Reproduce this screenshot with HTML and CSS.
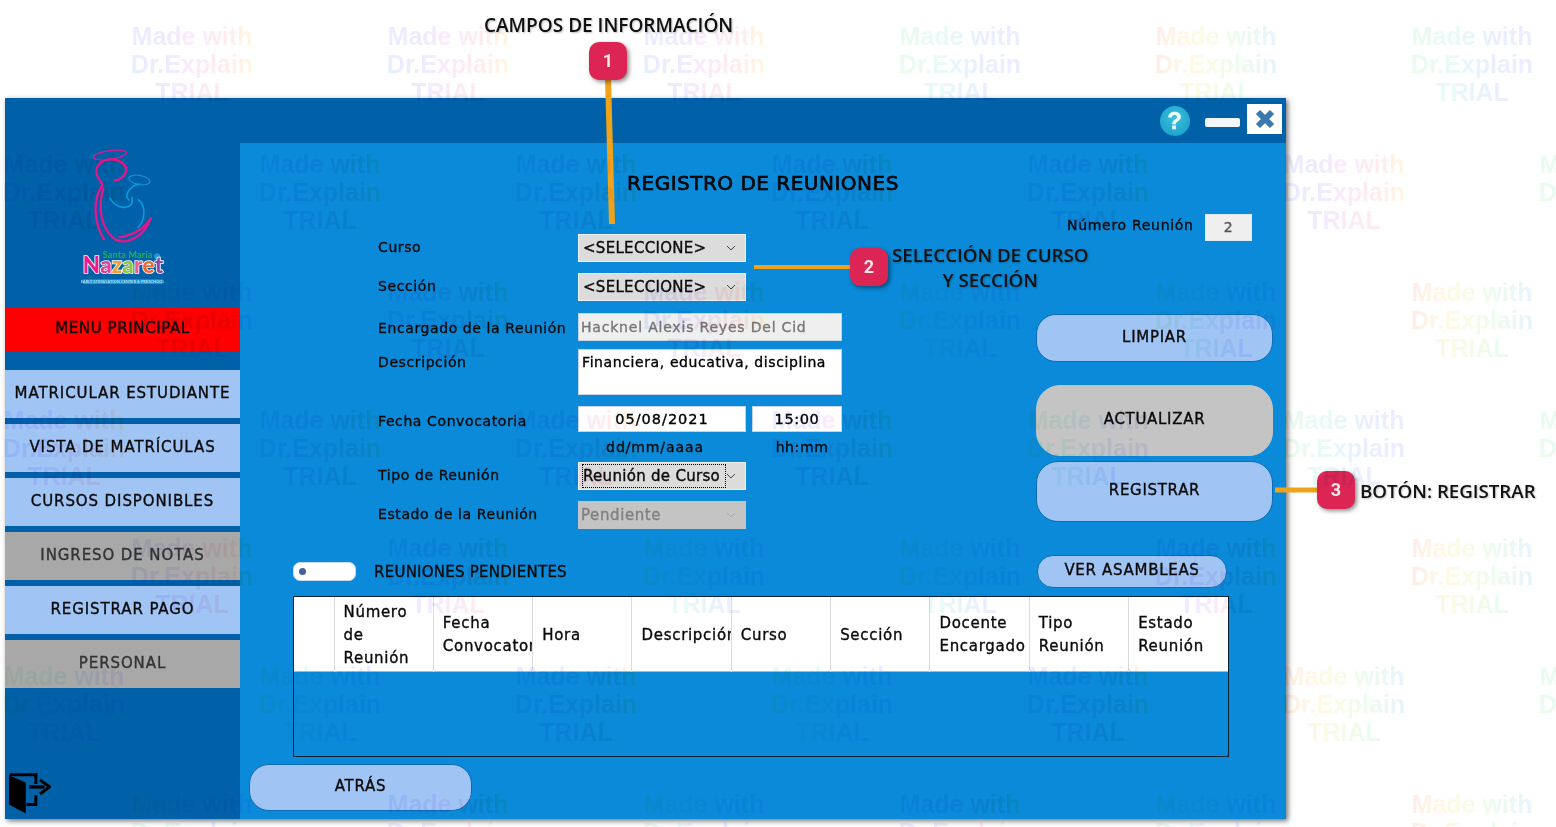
FILE: index.html
```html
<!DOCTYPE html>
<html lang="es">
<head>
    <meta charset="UTF-8">
    <meta name="viewport" content="width=device-width, initial-scale=1.0">
    <title>Registro de Reuniones</title>
    <link rel="stylesheet" href="styles.css">
</head>
<body>

<div class="app">
    <div class="topbar">
        <div class="help">?</div>
        <div class="minimize"></div>
        <div class="close">
            <svg width="22" height="22" viewBox="0 0 22 22"><path d="M4 4 L18 18 M18 4 L4 18" stroke="#3a78b0" stroke-width="6"/></svg>
        </div>
    </div>

    <div class="app-body">
        <div class="sidebar">
            <svg class="logo" width="120" height="147" viewBox="0 9 360 441">
                <g fill="none" stroke="#e0188f" stroke-width="7" stroke-linecap="round">
                    <ellipse cx="150" cy="45" rx="50" ry="13" transform="rotate(-8 150 45)" stroke-width="4"/>
                    <path d="M198 82 C178 50 130 50 112 80 C100 105 125 122 127 135 C103 170 95 235 132 298"/>
                    <path d="M130 145 C115 195 118 262 165 298 C205 318 255 285 272 235"/>
                    <path d="M178 292 C215 285 252 270 272 235"/>
                    <path d="M198 82 C202 98 190 116 165 122"/>
                </g>
                <g fill="none" stroke="#0f97dc" stroke-width="5" stroke-linecap="round">
                    <ellipse cx="238" cy="120" rx="32" ry="14" transform="rotate(10 238 120)" stroke-width="3"/>
                    <path d="M240 132 C212 135 190 165 207 180"/>
                    <path d="M150 175 C175 215 225 208 216 172"/>
                    <path d="M235 178 C262 200 252 245 235 262"/>
                </g>
                <text class="logo-santa" x="128" y="355">Santa María</text>
                <circle cx="291" cy="349" r="9" fill="#1c9ad6"/>
                <text class="logo-name" x="68" y="398"><tspan fill="#ec1c8c">N</tspan><tspan fill="#e33b9a">a</tspan><tspan fill="#f0a030">z</tspan><tspan fill="#8dc63f">a</tspan><tspan fill="#ee5a8c">r</tspan><tspan fill="#ee6a30">e</tspan><tspan fill="#8e4aa8">t</tspan></text>
                <rect x="68" y="418" width="240" height="14" fill="#1c9ad6"/>
                <text class="logo-strip" x="188" y="429">EARLY STIMULATION CENTER &amp; PRESCHOOL</text>
            </svg>

            <div class="menu-main">MENU PRINCIPAL</div>
            <div class="nav">
                <div class="nav-item">MATRICULAR ESTUDIANTE</div>
                <div class="nav-item">VISTA DE MATRÍCULAS</div>
                <div class="nav-item">CURSOS DISPONIBLES</div>
                <div class="nav-item off">INGRESO DE NOTAS</div>
                <div class="nav-item">REGISTRAR PAGO</div>
                <div class="nav-item off">PERSONAL</div>
            </div>

            <svg class="exit" width="43" height="42" viewBox="25 372 128 124">
                <path d="M28 378 L78 400 V492 L28 465 Z" fill="#000"/>
                <path d="M30 377 H108 V404 M108 438 V465 H80" fill="none" stroke="#000" stroke-width="9"/>
                <path d="M88 413 H134" stroke="#000" stroke-width="10"/>
                <path d="M120 392 L149 413 L120 434" fill="none" stroke="#000" stroke-width="9"/>
            </svg>
        </div>

        <div class="main">
            <h1>REGISTRO DE REUNIONES</h1>

            <div class="upper">
                <div class="form">
                    <label>Curso</label>
                    <div class="select"><span>&lt;SELECCIONE&gt;</span><svg width="10" height="6" viewBox="0 0 10 6"><path d="M1 1 L5 5 L9 1" fill="none" stroke="#444"/></svg></div>

                    <label>Sección</label>
                    <div class="select"><span>&lt;SELECCIONE&gt;</span><svg width="10" height="6" viewBox="0 0 10 6"><path d="M1 1 L5 5 L9 1" fill="none" stroke="#444"/></svg></div>

                    <label class="low">Encargado de la Reunión</label>
                    <input class="readonly" type="text" value="Hacknel Alexis Reyes Del Cid" readonly>

                    <label>Descripción</label>
                    <textarea readonly>Financiera, educativa, disciplina</textarea>

                    <label class="low">Fecha Convocatoria</label>
                    <div class="date-row">
                        <input class="date" type="text" value="05/08/2021" readonly>
                        <input class="time" type="text" value="15:00" readonly>
                    </div>

                    <div></div>
                    <div class="hint-row">
                        <span class="hint-date">dd/mm/aaaa</span>
                        <span class="hint-time">hh:mm</span>
                    </div>

                    <label>Tipo de Reunión</label>
                    <div class="select"><span class="focused">Reunión de Curso</span><svg width="10" height="6" viewBox="0 0 10 6"><path d="M1 1 L5 5 L9 1" fill="none" stroke="#444"/></svg></div>

                    <label>Estado de la Reunión</label>
                    <div class="select disabled"><span>Pendiente</span><svg width="10" height="6" viewBox="0 0 10 6"><path d="M1 1 L5 5 L9 1" fill="none" stroke="#aaa"/></svg></div>
                </div>

                <div class="actions">
                    <div class="numero">
                        <span>Número Reunión</span>
                        <div class="numero-box">2</div>
                    </div>
                    <button class="btn limpiar">LIMPIAR</button>
                    <button class="btn actualizar">ACTUALIZAR</button>
                    <button class="btn registrar">REGISTRAR</button>
                </div>
            </div>

            <div class="pending">
                <div class="toggle"><i></i></div>
                <span>REUNIONES PENDIENTES</span>
                <button class="btn ver">VER ASAMBLEAS</button>
            </div>

            <div class="table-box">
                <table>
                    <tr>
                        <th class="first"></th>
                        <th>Número<br>de<br>Reunión</th>
                        <th>Fecha<br>Convocatoria</th>
                        <th>Hora</th>
                        <th>Descripción</th>
                        <th>Curso</th>
                        <th>Sección</th>
                        <th>Docente<br>Encargado</th>
                        <th>Tipo<br>Reunión</th>
                        <th>Estado<br>Reunión</th>
                    </tr>
                </table>
            </div>

            <button class="btn atras">ATRÁS</button>
        </div>
    </div>
</div>

<!-- Anotaciones sobre la captura -->
<svg class="callout-lines" width="1556" height="827">
    <path d="M608 78 L612 224" stroke="#f0a318" stroke-width="6"/>
    <path d="M754 267 H852" stroke="#f0a318" stroke-width="4"/>
    <path d="M1275 490 H1320" stroke="#f0a318" stroke-width="5"/>
</svg>
<div class="badge b1">1</div>
<div class="badge b2">2</div>
<div class="badge b3">3</div>
<div class="note n1">CAMPOS DE INFORMACIÓN</div>
<div class="note n2">SELECCIÓN DE CURSO<br>Y SECCIÓN</div>
<div class="note n3">BOTÓN: REGISTRAR</div>

<!-- Marca de agua -->
<div class="watermark">
    <div class="wm-row odd">
        <div class="wm a">Made with<br>Dr.Explain<br>TRIAL</div>
        <div class="wm a">Made with<br>Dr.Explain<br>TRIAL</div>
        <div class="wm a">Made with<br>Dr.Explain<br>TRIAL</div>
        <div class="wm b">Made with<br>Dr.Explain<br>TRIAL</div>
        <div class="wm c">Made with<br>Dr.Explain<br>TRIAL</div>
        <div class="wm b">Made with<br>Dr.Explain<br>TRIAL</div>
    </div>
    <div class="wm-row">
        <div class="wm a">Made with<br>Dr.Explain<br>TRIAL</div>
        <div class="wm a">Made with<br>Dr.Explain<br>TRIAL</div>
        <div class="wm a">Made with<br>Dr.Explain<br>TRIAL</div>
        <div class="wm a">Made with<br>Dr.Explain<br>TRIAL</div>
        <div class="wm a">Made with<br>Dr.Explain<br>TRIAL</div>
        <div class="wm a">Made with<br>Dr.Explain<br>TRIAL</div>
        <div class="wm b">Made with<br>Dr.Explain<br>TRIAL</div>
    </div>
    <div class="wm-row odd">
        <div class="wm b">Made with<br>Dr.Explain<br>TRIAL</div>
        <div class="wm a">Made with<br>Dr.Explain<br>TRIAL</div>
        <div class="wm a">Made with<br>Dr.Explain<br>TRIAL</div>
        <div class="wm b">Made with<br>Dr.Explain<br>TRIAL</div>
        <div class="wm b">Made with<br>Dr.Explain<br>TRIAL</div>
        <div class="wm c">Made with<br>Dr.Explain<br>TRIAL</div>
    </div>
    <div class="wm-row">
        <div class="wm a">Made with<br>Dr.Explain<br>TRIAL</div>
        <div class="wm a">Made with<br>Dr.Explain<br>TRIAL</div>
        <div class="wm a">Made with<br>Dr.Explain<br>TRIAL</div>
        <div class="wm a">Made with<br>Dr.Explain<br>TRIAL</div>
        <div class="wm b">Made with<br>Dr.Explain<br>TRIAL</div>
        <div class="wm b">Made with<br>Dr.Explain<br>TRIAL</div>
        <div class="wm b">Made with<br>Dr.Explain<br>TRIAL</div>
    </div>
    <div class="wm-row odd">
        <div class="wm a">Made with<br>Dr.Explain<br>TRIAL</div>
        <div class="wm a">Made with<br>Dr.Explain<br>TRIAL</div>
        <div class="wm b">Made with<br>Dr.Explain<br>TRIAL</div>
        <div class="wm b">Made with<br>Dr.Explain<br>TRIAL</div>
        <div class="wm a">Made with<br>Dr.Explain<br>TRIAL</div>
        <div class="wm c">Made with<br>Dr.Explain<br>TRIAL</div>
    </div>
    <div class="wm-row">
        <div class="wm b">Made with<br>Dr.Explain<br>TRIAL</div>
        <div class="wm b">Made with<br>Dr.Explain<br>TRIAL</div>
        <div class="wm a">Made with<br>Dr.Explain<br>TRIAL</div>
        <div class="wm b">Made with<br>Dr.Explain<br>TRIAL</div>
        <div class="wm a">Made with<br>Dr.Explain<br>TRIAL</div>
        <div class="wm c">Made with<br>Dr.Explain<br>TRIAL</div>
        <div class="wm b">Made with<br>Dr.Explain<br>TRIAL</div>
    </div>
    <div class="wm-row odd">
        <div class="wm b">Made with<br>Dr.Explain<br>TRIAL</div>
        <div class="wm a">Made with<br>Dr.Explain<br>TRIAL</div>
        <div class="wm b">Made with<br>Dr.Explain<br>TRIAL</div>
        <div class="wm a">Made with<br>Dr.Explain<br>TRIAL</div>
        <div class="wm b">Made with<br>Dr.Explain<br>TRIAL</div>
        <div class="wm c">Made with<br>Dr.Explain<br>TRIAL</div>
    </div>
</div>

</body>
</html>
```

FILE: styles.css
```css
* {
    box-sizing: border-box;
}
html, body {
    height: 827px;
    overflow: hidden;
}
body {
    margin: 0;
    padding: 98px 0 0 5px;
    background-color: white;
    font-family: "DejaVu Sans", sans-serif;
    font-size: 14px;
    letter-spacing: 0.6px;
    color: #0a0a0a;
    position: relative;
}

/* Ventana */
.app {
    width: 1281px;
    height: 721px;
    display: flex;
    flex-direction: column;
    background-color: #0a8ad8;
    box-shadow: 2px 2px 5px rgba(0,0,0,0.55);
    -webkit-text-stroke: 0.35px currentColor;
}
.topbar {
    height: 45px;
    background-color: #0060a8;
    display: flex;
    align-items: flex-start;
    justify-content: flex-end;
    padding: 6px 4px 0 0;
}
.help {
    width: 30px;
    height: 30px;
    margin-top: 2px;
    border-radius: 50%;
    background: radial-gradient(circle at 50% 40%, #3cc0dc, #149cc8);
    color: #eefafd;
    font: bold 24px/30px "Liberation Sans", sans-serif;
    text-align: center;
}
.minimize {
    width: 35px;
    height: 9px;
    margin: 14px 7px 0 15px;
    border-radius: 2px;
    background-color: #f2f6fa;
}
.close {
    width: 35px;
    height: 30px;
    background-color: white;
    display: flex;
    align-items: center;
    justify-content: center;
}
.app-body {
    flex: 1;
    display: flex;
}

/* Menu lateral */
.sidebar {
    width: 235px;
    background-color: #0060a8;
    display: flex;
    flex-direction: column;
}
.logo {
    margin: 0 0 17px 55px;
    flex: none;
}
.logo-santa {
    font: bold 27px "Lato", sans-serif;
    fill: #22b060;
    stroke: none;
    -webkit-text-stroke: 0;
}
.logo-name {
    font: 900 67px "Lato", sans-serif;
    stroke: white;
    stroke-width: 5px;
    paint-order: stroke;
    -webkit-text-stroke: 0;
}
.logo-strip {
    font: 11px "Lato", sans-serif;
    fill: #d8f0fa;
    stroke: none;
    text-anchor: middle;
    -webkit-text-stroke: 0;
}
.menu-main {
    height: 44px;
    background-color: #ff0000;
    text-align: center;
    line-height: 43px;
    font-size: 15px;
}
.nav {
    margin-top: 19px;
    display: flex;
    flex-direction: column;
    gap: 6px;
}
.nav-item {
    height: 48px;
    line-height: 46px;
    background-color: #a0c4f4;
    text-align: center;
    font-size: 15px;
    letter-spacing: 0.9px;
}
.nav-item.off {
    background-color: #a8a8a8;
    color: #333;
}
.exit {
    margin: auto 0 4px 3px;
}

/* Contenido */
.main {
    flex: 1;
    display: flex;
    flex-direction: column;
}
h1 {
    margin: 28px 0 0 0;
    height: 43px;
    font-size: 20px;
    line-height: 24px;
    font-weight: normal;
    letter-spacing: 0.5px;
    -webkit-text-stroke: 0.65px #000;
    text-align: center;
}
.upper {
    display: flex;
}
.form {
    width: 464px;
    margin: 20px 0 0 138px;
    display: grid;
    grid-template-columns: 200px 264px;
    grid-template-rows: 39px 40px 36px 57px 26px 30px 39px 29px;
}
.form label {
    line-height: 26px;
}
.form label.low {
    margin-top: 2px;
}
.select {
    width: 168px;
    height: 28px;
    padding: 0 9px 0 4px;
    background-color: #dcdcdc;
    border: 1px solid #f0f0f0;
    display: flex;
    align-items: center;
    justify-content: space-between;
    font-size: 15px;
    letter-spacing: 0.3px;
}
.select.disabled {
    padding-left: 2px;
    background-color: #c4c4c4;
    border-color: #c4c4c4;
    color: #808080;
    letter-spacing: 0.6px;
}
.focused {
    border: 1px dotted #000;
    width: 146px;
    padding: 2px 0;
    margin-left: -1px;
    white-space: nowrap;
}
input, textarea {
    font: inherit;
    letter-spacing: inherit;
    -webkit-text-stroke: inherit;
    border: 1px solid #c4d4e4;
    border-radius: 0;
    outline: none;
    padding: 0 2px;
    color: #000;
}
.readonly {
    width: 264px;
    height: 28px;
    background-color: #efefef;
    color: #777;
    letter-spacing: 0.8px;
}
textarea {
    width: 264px;
    height: 46px;
    padding: 4px 3px;
    background-color: white;
    resize: none;
    overflow: hidden;
}
.date-row {
    display: flex;
    gap: 6px;
    align-items: flex-start;
}
.date-row input {
    height: 26px;
    text-align: center;
    font-size: 14.5px;
}
.date {
    width: 168px;
    letter-spacing: 1px;
}
.time {
    width: 90px;
}
.hint-row {
    display: flex;
    align-items: center;
}
.hint-date {
    width: 168px;
    flex: none;
    text-align: center;
    padding-right: 14px;
    letter-spacing: 0.9px;
}
.hint-time {
    width: 112px;
    flex: none;
    text-align: center;
}

/* Botones */
.actions {
    width: 237px;
    margin-left: 194px;
    display: flex;
    flex-direction: column;
}
.numero {
    height: 26px;
    margin-left: 31px;
    width: 185px;
    display: flex;
    align-items: center;
    justify-content: space-between;
    white-space: nowrap;
    letter-spacing: 0.7px;
}
.numero span {
    margin-top: -4px;
}
.numero-box {
    width: 47px;
    height: 27px;
    flex: none;
    margin-left: 8px;
    background-color: #efefef;
    border: 1px solid #dde8f0;
    text-align: center;
    line-height: 25px;
    color: #555;
}
.btn {
    font: inherit;
    font-size: 15px;
    letter-spacing: 0.7px;
    -webkit-text-stroke: inherit;
    color: #0a0a0a;
    background-color: #a0c4f4;
    border: 1px solid #0e6cb4;
    padding: 0 0 3px 0;
}
.limpiar {
    height: 48px;
    margin-top: 74px;
    border-radius: 20px;
}
.actualizar {
    height: 71px;
    margin-top: 23px;
    border-radius: 24px;
    background-color: #c4c4c4;
    border-color: #c4c4c4;
}
.registrar {
    height: 61px;
    margin-top: 5px;
    border-radius: 22px;
}
.pending {
    height: 33px;
    margin: 25px 59px 8px 53px;
    display: flex;
    align-items: center;
    font-size: 15px;
    letter-spacing: 0.25px;
}
.toggle {
    width: 63px;
    height: 19px;
    margin-right: 18px;
    background-color: white;
    border: 1px solid #c8d8e8;
    border-radius: 7px;
    display: flex;
    align-items: center;
    padding-left: 5px;
}
.toggle i {
    width: 7px;
    height: 7px;
    border-radius: 50%;
    background-color: #4a5f9a;
}
.ver {
    width: 190px;
    height: 33px;
    margin-left: auto;
    border-radius: 16px;
}

/* Tabla */
.table-box {
    width: 936px;
    height: 161px;
    margin-left: 53px;
    border: 1px solid #0a2030;
}
table {
    width: 934px;
    height: 75px;
    table-layout: fixed;
    border-collapse: collapse;
    background-color: white;
    border-bottom: 1px solid #b8b8b8;
}
th {
    padding: 2px 0 0 9px;
    width: 99.3px;
    font-size: 15px;
    font-weight: normal;
    letter-spacing: 0.7px;
    line-height: 23px;
    text-align: left;
    white-space: nowrap;
    overflow: hidden;
    border-left: 1px solid #dcdcdc;
}
th.first {
    width: 40px;
    border-left: none;
}
.atras {
    width: 223px;
    height: 47px;
    margin: 7px 0 0 9px;
    border-radius: 20px;
}

/* Anotaciones */
.callout-lines {
    position: absolute;
    top: 0;
    left: 0;
}
.badge {
    position: absolute;
    width: 38px;
    height: 38px;
    border-radius: 10px;
    background-color: #dc2554;
    box-shadow: 2px 2px 4px rgba(0,0,0,0.45);
    color: #fbe6ec;
    font: bold 18px/38px "Roboto", sans-serif;
    letter-spacing: 0;
    text-align: center;
}
.b1 { left: 589px; top: 42px; }
.b2 { left: 850px; top: 248px; }
.b3 { left: 1317px; top: 471px; }
.note {
    position: absolute;
    font: 600 19px/25px "Open Sans", sans-serif;
    letter-spacing: 0;
    color: #111;
    text-shadow: 1px 1px 2px rgba(0,0,0,0.25);
    white-space: nowrap;
}
.n1 { left: 484px; top: 13px; }
.n2 { left: 892px; top: 242px; text-align: center; font-size: 18.7px; }
.n3 { left: 1360px; top: 478px; font-size: 18.7px; }

/* Marca de agua */
.watermark {
    position: absolute;
    top: 22px;
    left: 0;
    width: 1556px;
    height: 805px;
    overflow: hidden;
    pointer-events: none;
    mix-blend-mode: multiply;
}
.wm-row {
    height: 128px;
    display: flex;
}
.wm-row.odd {
    padding-left: 128px;
}
.wm {
    width: 128px;
    margin-right: 128px;
    flex: none;
    font: bold 25px/28px "Liberation Sans", sans-serif;
    letter-spacing: 0;
    text-align: center;
    white-space: nowrap;
    color: transparent;
    background-clip: text;
    -webkit-background-clip: text;
}
.wm.a {
    background-image: linear-gradient(90deg, #e8f0ff, #ecebff, #fbeafc, #ffecec, #fff7e2);
}
.wm.b {
    background-image: linear-gradient(90deg, #eafcea, #e8faf8, #e8f0ff, #efecff);
}
.wm.c {
    background-image: linear-gradient(90deg, #ffece8, #fffae4, #ecfcec, #eaf2ff);
}
```
